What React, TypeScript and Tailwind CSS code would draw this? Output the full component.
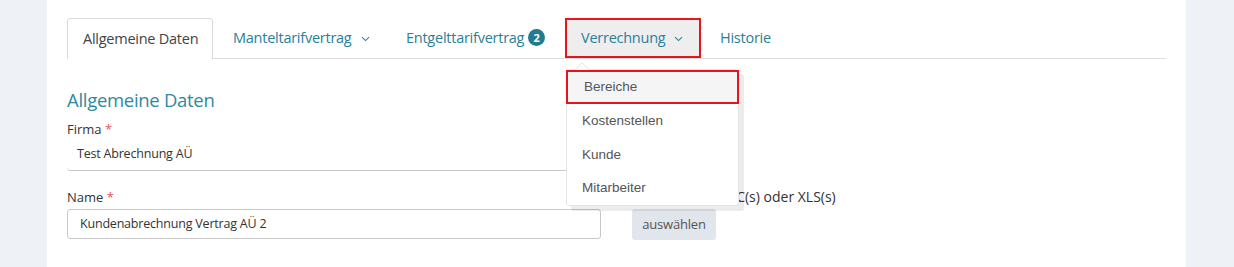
import React from "react";

const Chevron = () => (
  <svg width="9" height="6" viewBox="0 0 9 6" className="ml-[9px] mt-[2px] shrink-0" fill="none">
    <path d="M1 1.2 L4.5 4.6 L8 1.2" stroke="#2a8099" strokeWidth="1.1" />
  </svg>
);

export default function App() {
  const font = { fontFamily: '"Open Sans", sans-serif' };
  const tabText = "text-[14.5px] tracking-[-0.25px] text-[#2a8099]";
  const bodyText = "text-[12.5px] tracking-[-0.2px] text-[#333]";
  return (
    <div className="flex w-[1234px] h-[267px] bg-[#eef1f5] overflow-hidden" style={font}>
      <div className="w-[47px] shrink-0" />
      <div className="w-[1139px] shrink-0 bg-white px-[20px] pt-[18px]">
        {/* Tabs */}
        <div className="flex items-start border-b border-[#dcdcdc] h-[41px]">
          <div className="w-[146px] h-[41px] pl-[15px] flex items-center border border-b-0 border-[#dcdcdc] rounded-t-[4px] bg-white text-[14.5px] tracking-[-0.25px] text-[#444] whitespace-nowrap">
            Allgemeine Daten
          </div>
          <div className={`ml-[4px] w-[169px] h-[40px] pl-[16px] flex items-center whitespace-nowrap ${tabText}`}>
            Manteltarifvertrag
            <Chevron />
          </div>
          <div className={`ml-[4px] w-[171px] h-[40px] pl-[16px] flex items-center whitespace-nowrap ${tabText}`}>
            Entgelttarifvertrag
            <span className="ml-[4px] mb-[2px] w-[17px] h-[17px] rounded-full bg-[#237b90] text-white text-[11px] tracking-normal font-bold flex items-center justify-center leading-none shrink-0">
              2
            </span>
          </div>
          <div className="relative ml-[4px] w-[136px] h-[40px]">
            <div className={`w-[136px] h-[40px] pl-[14px] flex items-center bg-[#eeeeee] border-2 border-[#e8141b] whitespace-nowrap ${tabText}`}>
              Verrechnung
              <Chevron />
            </div>
            {/* dropdown */}
            <div className="absolute left-px top-[51px] z-10">
              <svg width="16" height="8" viewBox="0 0 16 8" className="absolute left-[8px] -top-[7px]">
                <path d="M0 8 L8 0.8 L16 8 Z" fill="#fff" />
                <path d="M0.5 8 L8 0.8 L15.5 8" fill="none" stroke="#e2e2e2" strokeWidth="1" />
              </svg>
              <div
                className="w-[173px] h-[137px] bg-white rounded-[3px] border border-[#e6e6e6] shadow-[5px_5px_0_rgba(0,0,0,0.075)] text-[13.5px] text-[#555]"
                style={{ fontFamily: '"Liberation Sans", Arial, sans-serif' }}
              >
                <div className="h-[34px] -ml-px -mr-px flex items-center pl-[16px] bg-[#f5f5f5] border-2 border-[#e8141b]">
                  Bereiche
                </div>
                <div className="h-[34px] flex items-center pl-[15px]">Kostenstellen</div>
                <div className="h-[34px] flex items-center pl-[15px]">Kunde</div>
                <div className="h-[33px] flex items-center pl-[15px]">Mitarbeiter</div>
              </div>
            </div>
          </div>
          <div className={`ml-[3px] h-[40px] px-[16px] flex items-center whitespace-nowrap ${tabText}`}>
            Historie
          </div>
        </div>

        {/* Heading */}
        <div className="mt-[28px] text-[18.5px] tracking-[-0.3px] leading-[26px] text-[#2d8aa3]">Allgemeine Daten</div>

        <div className="flex mt-[7px]">
          <div className="w-[534px] shrink-0">
            <div className="text-[13px] leading-[18px] text-[#333]">
              Firma <span className="text-[#e8505b]">*</span>
            </div>
            <div className={`h-[33px] border-b border-[#c8c8c8] rounded-b-[4px] flex items-center pl-[10px] ${bodyText}`}>
              Test Abrechnung AÜ
            </div>
            <div className="mt-[17px] text-[13px] leading-[18px] text-[#333]">
              Name <span className="text-[#e8505b]">*</span>
            </div>
            <div className={`mt-[3px] h-[30px] border border-[#c8c8c8] rounded-[3px] flex items-center pl-[12px] ${bodyText}`}>
              Kundenabrechnung Vertrag AÜ 2
            </div>
          </div>
          <div className="ml-[31px] pt-[68px]">
            <div className="text-[14px] leading-[18px] text-[#333] whitespace-nowrap">
              Vorlagen als DOC(s) oder XLS(s)
            </div>
            <div className="mt-[3px] w-[84px] h-[31px] rounded-[3px] bg-[#e1e5ec] flex items-center justify-center text-[13px] tracking-[-0.2px] text-[#555]">
              auswählen
            </div>
          </div>
        </div>
      </div>
      <div className="flex-1" />
    </div>
  );
}
